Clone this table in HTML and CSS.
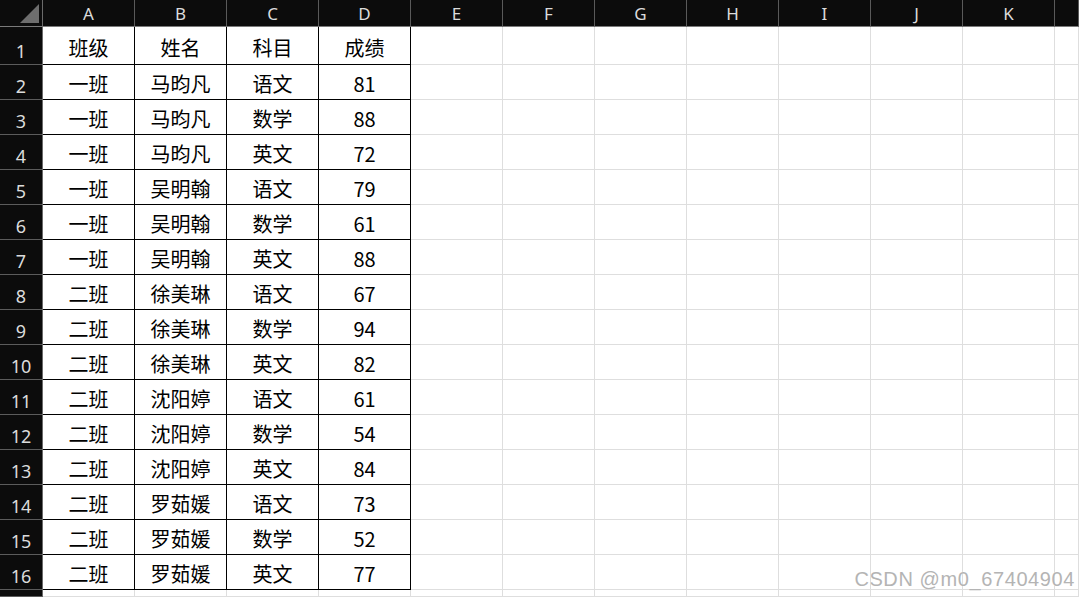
FILE: index.html
```html
<!DOCTYPE html>
<html lang="zh-CN">
<head>
<meta charset="utf-8">
<title>Sheet</title>
<link rel="stylesheet" href="styles.css">
</head>
<body>
<div class="sheet" id="sheet">
  <div class="corner"><span class="tri"></span></div>
  <div class="ch">A</div><div class="ch">B</div><div class="ch">C</div><div class="ch">D</div><div class="ch">E</div><div class="ch">F</div><div class="ch">G</div><div class="ch">H</div><div class="ch">I</div><div class="ch">J</div><div class="ch">K</div><div class="ch last"></div>

  <div class="rh">1</div><div class="c d">班级</div><div class="c d">姓名</div><div class="c d">科目</div><div class="c d">成绩</div><div class="c"></div><div class="c"></div><div class="c"></div><div class="c"></div><div class="c"></div><div class="c"></div><div class="c"></div><div class="c"></div>
  <div class="rh">2</div><div class="c d">一班</div><div class="c d">马昀凡</div><div class="c d">语文</div><div class="c d">81</div><div class="c"></div><div class="c"></div><div class="c"></div><div class="c"></div><div class="c"></div><div class="c"></div><div class="c"></div><div class="c"></div>
  <div class="rh">3</div><div class="c d">一班</div><div class="c d">马昀凡</div><div class="c d">数学</div><div class="c d">88</div><div class="c"></div><div class="c"></div><div class="c"></div><div class="c"></div><div class="c"></div><div class="c"></div><div class="c"></div><div class="c"></div>
  <div class="rh">4</div><div class="c d">一班</div><div class="c d">马昀凡</div><div class="c d">英文</div><div class="c d">72</div><div class="c"></div><div class="c"></div><div class="c"></div><div class="c"></div><div class="c"></div><div class="c"></div><div class="c"></div><div class="c"></div>
  <div class="rh">5</div><div class="c d">一班</div><div class="c d">吴明翰</div><div class="c d">语文</div><div class="c d">79</div><div class="c"></div><div class="c"></div><div class="c"></div><div class="c"></div><div class="c"></div><div class="c"></div><div class="c"></div><div class="c"></div>
  <div class="rh">6</div><div class="c d">一班</div><div class="c d">吴明翰</div><div class="c d">数学</div><div class="c d">61</div><div class="c"></div><div class="c"></div><div class="c"></div><div class="c"></div><div class="c"></div><div class="c"></div><div class="c"></div><div class="c"></div>
  <div class="rh">7</div><div class="c d">一班</div><div class="c d">吴明翰</div><div class="c d">英文</div><div class="c d">88</div><div class="c"></div><div class="c"></div><div class="c"></div><div class="c"></div><div class="c"></div><div class="c"></div><div class="c"></div><div class="c"></div>
  <div class="rh">8</div><div class="c d">二班</div><div class="c d">徐美琳</div><div class="c d">语文</div><div class="c d">67</div><div class="c"></div><div class="c"></div><div class="c"></div><div class="c"></div><div class="c"></div><div class="c"></div><div class="c"></div><div class="c"></div>
  <div class="rh">9</div><div class="c d">二班</div><div class="c d">徐美琳</div><div class="c d">数学</div><div class="c d">94</div><div class="c"></div><div class="c"></div><div class="c"></div><div class="c"></div><div class="c"></div><div class="c"></div><div class="c"></div><div class="c"></div>
  <div class="rh">10</div><div class="c d">二班</div><div class="c d">徐美琳</div><div class="c d">英文</div><div class="c d">82</div><div class="c"></div><div class="c"></div><div class="c"></div><div class="c"></div><div class="c"></div><div class="c"></div><div class="c"></div><div class="c"></div>
  <div class="rh">11</div><div class="c d">二班</div><div class="c d">沈阳婷</div><div class="c d">语文</div><div class="c d">61</div><div class="c"></div><div class="c"></div><div class="c"></div><div class="c"></div><div class="c"></div><div class="c"></div><div class="c"></div><div class="c"></div>
  <div class="rh">12</div><div class="c d">二班</div><div class="c d">沈阳婷</div><div class="c d">数学</div><div class="c d">54</div><div class="c"></div><div class="c"></div><div class="c"></div><div class="c"></div><div class="c"></div><div class="c"></div><div class="c"></div><div class="c"></div>
  <div class="rh">13</div><div class="c d">二班</div><div class="c d">沈阳婷</div><div class="c d">英文</div><div class="c d">84</div><div class="c"></div><div class="c"></div><div class="c"></div><div class="c"></div><div class="c"></div><div class="c"></div><div class="c"></div><div class="c"></div>
  <div class="rh">14</div><div class="c d">二班</div><div class="c d">罗茹媛</div><div class="c d">语文</div><div class="c d">73</div><div class="c"></div><div class="c"></div><div class="c"></div><div class="c"></div><div class="c"></div><div class="c"></div><div class="c"></div><div class="c"></div>
  <div class="rh">15</div><div class="c d">二班</div><div class="c d">罗茹媛</div><div class="c d">数学</div><div class="c d">52</div><div class="c"></div><div class="c"></div><div class="c"></div><div class="c"></div><div class="c"></div><div class="c"></div><div class="c"></div><div class="c"></div>
  <div class="rh">16</div><div class="c d">二班</div><div class="c d">罗茹媛</div><div class="c d">英文</div><div class="c d">77</div><div class="c"></div><div class="c"></div><div class="c"></div><div class="c"></div><div class="c"></div><div class="c"></div><div class="c"></div><div class="c"></div>
  <div class="rh"></div><div class="c"></div><div class="c"></div><div class="c"></div><div class="c"></div><div class="c"></div><div class="c"></div><div class="c"></div><div class="c"></div><div class="c"></div><div class="c"></div><div class="c"></div><div class="c"></div>
</div>
<div class="wm">CSDN @m0_67404904</div>
</body>
</html>
```
FILE: styles.css
```css
html, body {
  margin: 0;
  padding: 0;
  background: #ffffff;
  overflow: hidden;
  width: 1079px;
  height: 597px;
}
.sheet {
  display: grid;
  grid-template-columns: 43px repeat(11, 92px) 24px;
  grid-template-rows: 27px 38px repeat(15, 35px) 7px;
  font-family: "Noto Sans CJK SC", "Noto Sans", sans-serif;
}
.corner {
  background: #0c0c0c;
  border-right: 1px solid #6a6a6a;
  border-bottom: 1px solid #7a7a7a;
  box-sizing: border-box;
  position: relative;
}
.tri {
  position: absolute;
  right: 3px;
  bottom: 3px;
  width: 0;
  height: 0;
  border-left: 19px solid transparent;
  border-bottom: 19px solid #6e6e6e;
}
.ch {
  background: #0c0c0c;
  color: #dcdcdc;
  border-right: 1px solid #5a5a5a;
  border-bottom: 1px solid #7a7a7a;
  box-sizing: border-box;
  display: flex;
  align-items: center;
  justify-content: center;
  font-family: "Noto Sans", "Open Sans", sans-serif;
  font-size: 17px;
  padding-top: 1px;
}
.rh {
  background: #0c0c0c;
  color: #dcdcdc;
  border-right: 1px solid #6a6a6a;
  border-bottom: 1px solid #5c5c5c;
  box-sizing: border-box;
  display: flex;
  align-items: flex-end;
  justify-content: center;
  font-family: "Noto Sans", "Open Sans", sans-serif;
  font-size: 18px;
  line-height: 22px;
  padding-bottom: 2px;
}
.c {
  border-right: 1px solid #dedede;
  border-bottom: 1px solid #dedede;
  box-sizing: border-box;
  display: flex;
  align-items: center;
  justify-content: center;
  font-size: 20px;
  color: #000;
  padding-top: 3px;
}
.c.d {
  border-right-color: #000;
  border-bottom-color: #000;
}
.wm {
  position: absolute;
  right: 4px;
  bottom: 6px;
  font-family: "Liberation Sans", Arial, sans-serif;
  font-size: 20px;
  color: #b4b4b4;
  text-shadow: 0 0 1px #ffffff;
  letter-spacing: 0.6px;
}
```
